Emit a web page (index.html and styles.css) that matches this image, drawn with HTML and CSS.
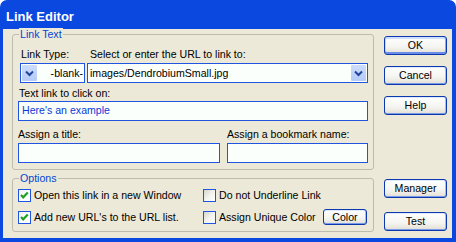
FILE: index.html
```html
<!DOCTYPE html>
<html>
<head>
<meta charset="utf-8">
<title>Link Editor</title>
<link rel="stylesheet" href="styles.css">
</head>
<body>
<div class="window">
  <div class="titlebar">Link Editor</div>
  <div class="client">
    <div class="main">
      <div class="group group-link">
        <span class="legend">Link Text</span>
        <div class="row-labels">
          <span class="lbl lbl-type">Link Type:</span>
          <span class="lbl lbl-url">Select or enter the URL to link to:</span>
        </div>
        <div class="row-combos">
          <div class="combo combo-type">
            <span class="drop"><svg width="15" height="16" viewBox="0 0 15 16"><path d="M4 6.5 L7.5 10 L11 6.5" fill="none" stroke="#21449e" stroke-width="2"/></svg></span>
            <span class="combo-text combo-right">-blank-</span>
          </div>
          <div class="combo combo-url">
            <span class="combo-text">images/DendrobiumSmall.jpg</span>
            <span class="drop"><svg width="15" height="16" viewBox="0 0 15 16"><path d="M4 6.5 L7.5 10 L11 6.5" fill="none" stroke="#21449e" stroke-width="2"/></svg></span>
          </div>
        </div>
        <div class="lbl lbl-text">Text link to click on:</div>
        <div class="input input-link">Here's an example</div>
        <div class="grid-assign">
          <span class="lbl">Assign a title:</span>
          <span class="lbl">Assign a bookmark name:</span>
          <div class="input"></div>
          <div class="input"></div>
        </div>
      </div>
      <div class="group group-options">
        <span class="legend">Options</span>
        <div class="opts">
          <div class="opt">
            <span class="cb checked"><svg width="11" height="11" viewBox="0 0 11 11"><path d="M2 5 L4.2 7.3 L8.8 2.6" fill="none" stroke="#21a121" stroke-width="2.2"/></svg></span>
            <span>Open this link in a new Window</span>
          </div>
          <div class="opt">
            <span class="cb"></span>
            <span>Do not Underline Link</span>
          </div>
          <div class="opt">
            <span class="cb checked"><svg width="11" height="11" viewBox="0 0 11 11"><path d="M2 5 L4.2 7.3 L8.8 2.6" fill="none" stroke="#21a121" stroke-width="2.2"/></svg></span>
            <span>Add new URL's to the URL list.</span>
          </div>
          <div class="opt">
            <span class="cb"></span>
            <span>Assign Unique Color</span>
            <span class="btn btn-color">Color</span>
          </div>
        </div>
      </div>
    </div>
    <div class="side">
      <div class="btn-group">
        <span class="btn btn-default">OK</span>
        <span class="btn">Cancel</span>
        <span class="btn">Help</span>
      </div>
      <div class="btn-group btn-group-bottom">
        <span class="btn">Manager</span>
        <span class="btn">Test</span>
      </div>
    </div>
  </div>
</div>
</body>
</html>
```
FILE: styles.css
```css
html, body {
  margin: 0;
  padding: 0;
  width: 456px;
  height: 242px;
  overflow: hidden;
  background: #ffffff;
  font-family: "Liberation Sans", Arial, sans-serif;
  font-size: 10.6px;
  line-height: 13px;
  color: #000;
}

.window {
  width: 456px;
  height: 242px;
  background: #0a48df;
  border-radius: 7px 7px 0 0;
  display: flex;
  flex-direction: column;
}

.titlebar {
  flex: none;
  height: 29px;
  box-sizing: border-box;
  padding: 9px 0 0 6px;
  color: #fff;
  font-weight: bold;
  font-size: 13px;
  line-height: 15px;
}

.client {
  flex: 1;
  margin: 0 4px 4px 3px;
  background: #ece9d8;
  display: flex;
  gap: 10px;
  padding: 5px 5px 6px 9px;
}

.main {
  width: 362px;
  flex: none;
  display: flex;
  flex-direction: column;
}

.group {
  position: relative;
  border: 1px solid #bdbcaf;
  border-radius: 3px;
  padding: 0 5px;
  box-sizing: border-box;
}

.group-link {
  height: 136px;
  padding-top: 13px;
}

.group-options {
  height: 54px;
  margin-top: 8px;
  padding-top: 8px;
}

.legend {
  position: absolute;
  top: -7px;
  left: 6px;
  padding: 0 1px;
  background: #ece9d8;
  color: #0046d5;
}

.lbl {
  white-space: nowrap;
}

.row-labels {
  display: flex;
  height: 13px;
  margin-bottom: 2px;
}

.lbl-type {
  margin-left: 3px;
  width: 66px;
}

.lbl-url {
  margin-left: 3px;
}

.row-combos {
  display: flex;
  gap: 2px;
  margin-left: 2px;
  height: 20px;
}

.combo {
  display: flex;
  height: 20px;
  box-sizing: border-box;
  border: 1px solid #1f55e0;
  background: #fbfffb;
}

.combo-type {
  width: 65px;
}

.combo-url {
  width: 281px;
}

.drop {
  flex: none;
  width: 15px;
  height: 16px;
  margin: 1px;
  border-radius: 1px;
  background: linear-gradient(#cddcfb, #b4cbf7);
  display: flex;
}

.combo-text {
  flex: 1;
  line-height: 18px;
  padding: 0 2px;
  white-space: nowrap;
  overflow: hidden;
}

.combo-right {
  text-align: right;
  padding-right: 1px;
}

.lbl-text {
  margin: 4px 0 1px 1px;
  height: 13px;
}

.input {
  height: 20px;
  box-sizing: border-box;
  border: 1px solid #1f55e0;
  background: #fbfffb;
  line-height: 17px;
  padding: 0 3px;
  white-space: nowrap;
}

.input-link {
  color: #0a3ad8;
}

.grid-assign {
  display: grid;
  grid-template-columns: 202px 141px;
  column-gap: 7px;
  row-gap: 2px;
  margin-top: 7px;
}

.opts {
  display: grid;
  grid-template-columns: 185px 1fr;
  grid-auto-rows: 17px;
  row-gap: 5px;
}

.opt {
  display: flex;
  align-items: center;
  gap: 3px;
  white-space: nowrap;
}

.cb {
  flex: none;
  width: 13px;
  height: 13px;
  box-sizing: border-box;
  border: 1px solid #1f55e0;
  background: linear-gradient(135deg, #d6d5cc 0%, #f2f2ee 50%, #ffffff 100%);
  display: flex;
}

.cb.checked {
  background: linear-gradient(135deg, #eeeeea 0%, #ffffff 60%);
}

.side {
  width: 63px;
  flex: none;
  display: flex;
  flex-direction: column;
  padding-top: 2px;
}

.btn-group {
  display: flex;
  flex-direction: column;
  gap: 11px;
}

.btn-group-bottom {
  margin-top: auto;
  margin-bottom: 1px;
  gap: 14px;
}

.btn {
  display: block;
  height: 19px;
  box-sizing: border-box;
  border: 1px solid #0c3aae;
  border-radius: 3px;
  background: linear-gradient(#ffffff 0%, #f4f4f0 60%, #e2ded2 100%);
  box-shadow: inset 0 -1px 0 #7b9bea, inset -1px 0 0 #a9bdf2, inset 0 1px 0 #dfe9fd;
  text-align: center;
  line-height: 17px;
  white-space: nowrap;
}

.btn-default {
  box-shadow: inset 0 -2px 0 #6a8be6, inset -1px 0 0 #8fa9ee, inset 1px 0 0 #c6d6fb, inset 0 2px 0 #cfdffd;
}

.btn-color {
  align-self: flex-start;
  margin-left: auto;
  margin-right: 1px;
  width: 44px;
  height: 16px;
  line-height: 14px;
}
```
